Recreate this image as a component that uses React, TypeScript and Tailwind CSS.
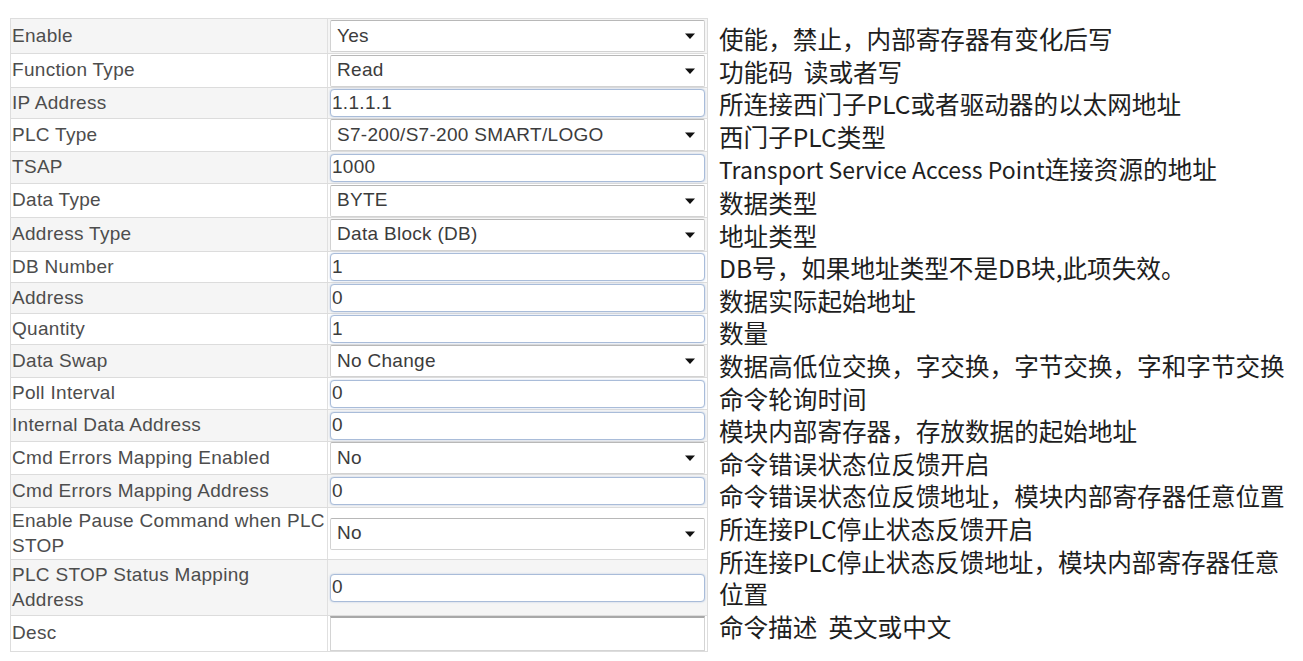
import React from 'react'

type Row = {
  label: string[]
  kind: 'select' | 'input' | 'text'
  value: string
  h: string
}

const rows: Row[] = [
  { label: ['Enable'], kind: 'select', value: 'Yes', h: 'h-[34px]' },
  { label: ['Function Type'], kind: 'select', value: 'Read', h: 'h-[34px]' },
  { label: ['IP Address'], kind: 'input', value: '1.1.1.1', h: 'h-[31px]' },
  { label: ['PLC Type'], kind: 'select', value: 'S7-200/S7-200 SMART/LOGO', h: 'h-[33px]' },
  { label: ['TSAP'], kind: 'input', value: '1000', h: 'h-[32px]' },
  { label: ['Data Type'], kind: 'select', value: 'BYTE', h: 'h-[34px]' },
  { label: ['Address Type'], kind: 'select', value: 'Data Block (DB)', h: 'h-[34px]' },
  { label: ['DB Number'], kind: 'input', value: '1', h: 'h-[31px]' },
  { label: ['Address'], kind: 'input', value: '0', h: 'h-[31px]' },
  { label: ['Quantity'], kind: 'input', value: '1', h: 'h-[31px]' },
  { label: ['Data Swap'], kind: 'select', value: 'No Change', h: 'h-[33px]' },
  { label: ['Poll Interval'], kind: 'input', value: '0', h: 'h-[32px]' },
  { label: ['Internal Data Address'], kind: 'input', value: '0', h: 'h-[32px]' },
  { label: ['Cmd Errors Mapping Enabled'], kind: 'select', value: 'No', h: 'h-[33px]' },
  { label: ['Cmd Errors Mapping Address'], kind: 'input', value: '0', h: 'h-[33px]' },
  { label: ['Enable Pause Command when PLC', 'STOP'], kind: 'select', value: 'No', h: 'h-[52px]' },
  { label: ['PLC STOP Status Mapping', 'Address'], kind: 'input', value: '0', h: 'h-[56px]' },
  { label: ['Desc'], kind: 'text', value: '', h: 'h-[36px]' },
]

// notes written next to the form
const notes: React.ReactNode[] = [
  '使能，禁止，内部寄存器有变化后写',
  '功能码  读或者写',
  '所连接西门子PLC或者驱动器的以太网地址',
  '西门子PLC类型',
  <>
    <span className="text-[23px]">Transport Service Access Point</span>连接资源的地址
  </>,
  '数据类型',
  '地址类型',
  'DB号，如果地址类型不是DB块,此项失效。',
  '数据实际起始地址',
  '数量',
  '数据高低位交换，字交换，字节交换，字和字节交换',
  '命令轮询时间',
  '模块内部寄存器，存放数据的起始地址',
  '命令错误状态位反馈开启',
  '命令错误状态位反馈地址，模块内部寄存器任意位置',
  '所连接PLC停止状态反馈开启',
  '所连接PLC停止状态反馈地址，模块内部寄存器任意',
  '位置',
  '命令描述  英文或中文',
]

function Control({ row }: { row: Row }) {
  if (row.kind === 'select') {
    return (
      <div className="flex h-[32px] w-full items-center justify-between rounded-[2px] border border-[#d2d2d2] border-t-[#b8b8b8] bg-white pl-[6px] pr-[9px] text-[#3c3c3c]">
        <span className="whitespace-nowrap">{row.value}</span>
        <svg width="10" height="6" viewBox="0 0 10 6" className="shrink-0">
          <path d="M0 0.5h10L5 6z" fill="#111" />
        </svg>
      </div>
    )
  }
  if (row.kind === 'input') {
    return (
      <div className="flex h-[28px] w-full items-center rounded-[4px] border border-[#a9bcd9] bg-white pl-[1px] text-[#3c3c3c] shadow-[0_0_2px_rgba(90,130,190,0.4)]">
        {row.value}
      </div>
    )
  }
  return (
    <div className="h-[35px] w-full border border-[#d4d4d4] border-t-2 border-t-[#a8a8a8] bg-white" />
  )
}

export default function App() {
  return (
    <div className="flex min-h-[661px] w-[1303px] items-start bg-white pl-[10px] pt-[18px] font-['Liberation_Sans',Arial,sans-serif]">
      <div className="w-[698px] border border-[#dddddd] text-[19px] tracking-[0.3px]">
        {rows.map((row, i) => (
          <div
            key={row.label.join(' ')}
            className={`flex ${row.h} ${i > 0 ? 'border-t border-[#dcdcdc]' : ''} ${
              i % 2 === 0 ? 'bg-[#f5f5f5]' : 'bg-white'
            }`}
          >
            <div className="flex w-[317px] shrink-0 flex-col justify-center border-r border-[#e0e0e0] pb-[2px] pl-[1px] leading-[25px] text-[#4d4d4d]">
              {row.label.map((l) => (
                <span key={l} className="whitespace-nowrap">
                  {l}
                </span>
              ))}
            </div>
            <div className="flex flex-1 items-center px-[2px]">
              <Control row={row} />
            </div>
          </div>
        ))}
      </div>
      <div className="ml-[11px] pt-[4px] font-['Noto_Sans_CJK_SC','Noto_Sans',sans-serif] text-[24.6px] leading-[32.6px] text-[#1e1e1e]">
        {notes.map((n, i) => (
          <div key={i} className="whitespace-pre">
            {n}
          </div>
        ))}
      </div>
    </div>
  )
}
